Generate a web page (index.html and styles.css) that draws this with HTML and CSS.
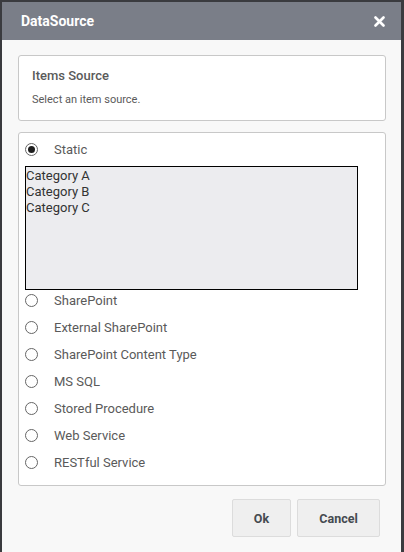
FILE: index.html
```
<!DOCTYPE html>
<html>
<head>
<meta charset="utf-8">
<link rel="stylesheet" href="styles.css">
</head>
<body>
<div class="dialog">
  <div class="header">
    <span class="title">DataSource</span>
    <svg class="close" width="11" height="11" viewBox="0 0 11 11"><path d="M1.5 1.5 L9.5 9.5 M9.5 1.5 L1.5 9.5" stroke="#fff" stroke-width="2.6" stroke-linecap="round"/></svg>
  </div>
  <div class="body">
    <div class="panel info">
      <div class="info-title">Items Source</div>
      <div class="info-desc">Select an item source.</div>
    </div>
    <div class="panel options">
      <div class="row"><span class="radio checked"></span><span class="label">Static</span></div>
      <div class="listbox">
        <div>Category A</div>
        <div>Category B</div>
        <div>Category C</div>
      </div>
      <div class="row first"><span class="radio"></span><span class="label">SharePoint</span></div>
      <div class="row"><span class="radio"></span><span class="label">External SharePoint</span></div>
      <div class="row"><span class="radio"></span><span class="label">SharePoint Content Type</span></div>
      <div class="row"><span class="radio"></span><span class="label">MS SQL</span></div>
      <div class="row"><span class="radio"></span><span class="label">Stored Procedure</span></div>
      <div class="row"><span class="radio"></span><span class="label">Web Service</span></div>
      <div class="row"><span class="radio"></span><span class="label">RESTful Service</span></div>
    </div>
    <div class="footer">
      <button class="btn ok">Ok</button>
      <button class="btn cancel">Cancel</button>
    </div>
  </div>
</div>
</body>
</html>
```
FILE: styles.css
```
html, body {
  margin: 0;
  padding: 0;
  background: #3a3b3f;
  width: 404px;
  height: 552px;
  overflow: hidden;
  font-family: Roboto, "Liberation Sans", sans-serif;
}
.dialog {
  margin: 2px 0 0 2px;
  width: 399px;
  height: 550px;
  background: #f8f8f8;
  display: flex;
  flex-direction: column;
}
.header {
  height: 38px;
  background: #7a7e88;
  display: flex;
  align-items: center;
  justify-content: space-between;
  padding: 0 16px 0 19px;
  flex-shrink: 0;
}
.title {
  color: #fff;
  font-weight: bold;
  font-size: 14px;
}
.close {
  display: block;
}
.body {
  padding: 15px 15px 0 16px;
  display: flex;
  flex-direction: column;
}
.panel {
  background: #fff;
  border: 1px solid #c8c8c8;
  border-radius: 3px;
}
.info {
  height: 64px;
  padding: 0 13px;
  display: flex;
  flex-direction: column;
}
.info-title {
  margin-top: 12px;
  font-size: 13px;
  line-height: 16px;
  font-weight: 500;
  color: #5a5a5a;
}
.info-desc {
  margin-top: 9px;
  font-size: 11px;
  line-height: 14px;
  color: #5a5a5a;
}
.options {
  margin-top: 11px;
  padding: 5px 6px 12px 6px;
  display: flex;
  flex-direction: column;
}
.row {
  height: 22px;
  display: flex;
  align-items: center;
  margin-top: 5px;
}
.row:first-child {
  margin-top: 0;
}
.row.first {
  margin-top: -1px;
}
.radio {
  width: 11px;
  height: 11px;
  border: 1px solid #666;
  border-radius: 50%;
  background: #fff;
  flex-shrink: 0;
  display: flex;
  align-items: center;
  justify-content: center;
}
.radio.checked::after {
  content: "";
  width: 7px;
  height: 7px;
  border-radius: 50%;
  background: #1e1e1e;
}
.label {
  margin-left: 16px;
  font-size: 13px;
  color: #5a5a5a;
}
.listbox {
  margin-top: 6px;
  width: 331px;
  height: 121px;
  border: 1px solid #000;
  background: #ececef;
  font-size: 13px;
  line-height: 16px;
  color: #333;
  padding: 1px 0 0 0;
}
.footer {
  display: flex;
  justify-content: flex-end;
  gap: 6px;
  margin-top: 13px;
  padding-right: 6px;
}
.btn {
  height: 38px;
  background: #efefef;
  border: 1px solid #dcdcdc;
  border-radius: 2px;
  font-family: Roboto, "Liberation Sans", sans-serif;
  font-size: 12.5px;
  font-weight: bold;
  color: #454a50;
  padding: 0;
}
.ok { width: 59px; }
.cancel { width: 83px; }
```
